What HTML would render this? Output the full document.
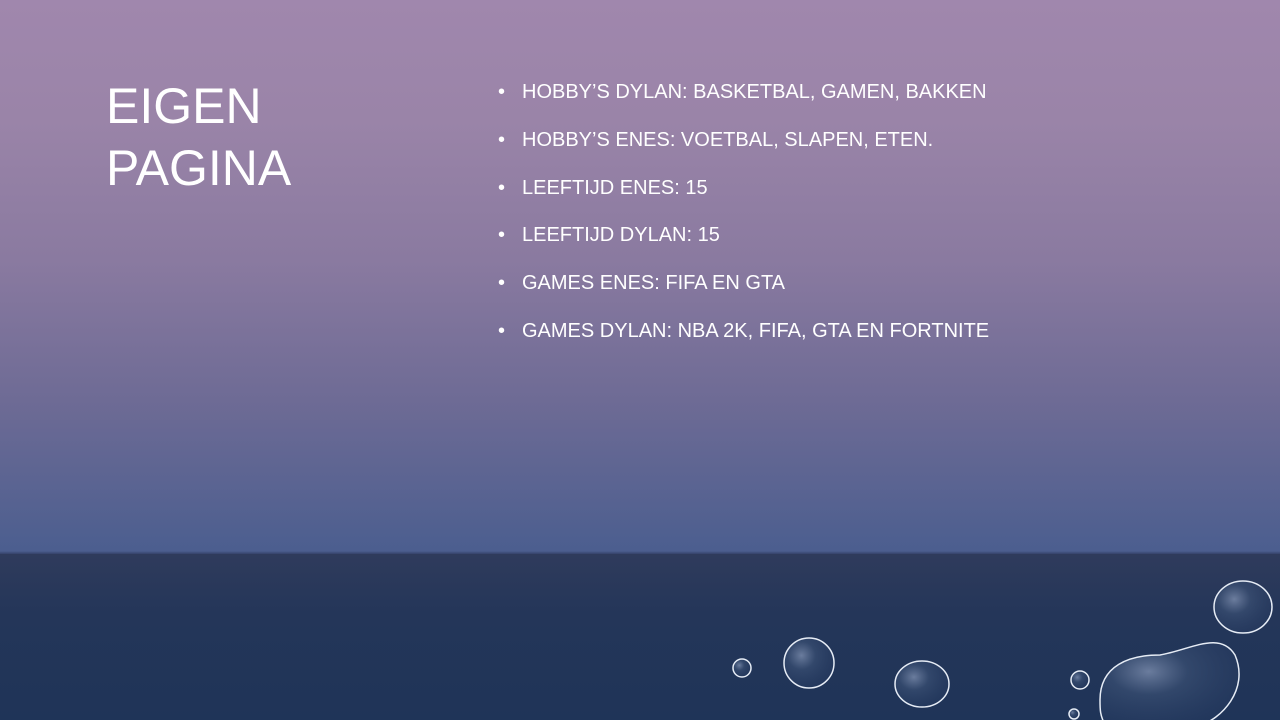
<!DOCTYPE html>
<html><head><style>
html,body{margin:0;padding:0}
body{width:1280px;height:720px;overflow:hidden;position:relative;font-family:"Liberation Sans",sans-serif;
background:linear-gradient(to bottom,#a087ad 0px,#9a84a8 120px,#8a7aa0 260px,#6e6b95 400px,#4b5e8f 553px)}
.bottom{position:absolute;left:0;top:554px;width:1280px;height:166px;background:linear-gradient(to bottom,#2f3b5c,#243659 60px,#1f3458)}
.bottom:before{content:"";position:absolute;left:0;top:-3px;width:100%;height:3px;background:linear-gradient(to bottom,rgba(0,0,0,0),rgba(20,25,50,.4))}
h1{position:absolute;left:106px;top:75px;margin:0;color:#fff;font-weight:normal;font-size:50px;line-height:62px}
ul{position:absolute;left:498px;top:80px;margin:0;padding:0;list-style:none;color:#fff;font-size:20px}
li{height:47.8px;line-height:24px;position:relative;padding-left:24px;white-space:nowrap}
li:before{content:"•";position:absolute;left:0;font-size:20px}
</style></head><body>
<h1>EIGEN<br>PAGINA</h1>
<ul>
<li>HOBBY’S DYLAN: BASKETBAL, GAMEN, BAKKEN</li>
<li>HOBBY’S ENES: VOETBAL, SLAPEN, ETEN.</li>
<li>LEEFTIJD ENES: 15</li>
<li>LEEFTIJD DYLAN: 15</li>
<li>GAMES ENES: FIFA EN GTA</li>
<li>GAMES DYLAN: NBA 2K, FIFA, GTA EN FORTNITE</li>
</ul>
<div class="bottom"></div>
<svg width="1280" height="720" style="position:absolute;left:0;top:0">
<defs><radialGradient id="g" cx="0.35" cy="0.35" r="0.7"><stop offset="0" stop-color="#8a9bbb" stop-opacity=".7"/><stop offset=".4" stop-color="#3e5478" stop-opacity=".6"/><stop offset="1" stop-color="#2a3f66" stop-opacity=".3"/></radialGradient></defs>
<g fill="url(#g)" stroke="#e6ecf5" stroke-width="1.5">
<circle cx="742" cy="668" r="9"/>
<circle cx="809" cy="663" r="25"/>
<ellipse cx="922" cy="684" rx="27" ry="23"/>
<circle cx="1080" cy="680" r="9"/>
<circle cx="1074" cy="714" r="5"/>
<ellipse cx="1243" cy="607" rx="29" ry="26"/>
<path d="M1100 700 C1100 665 1130 655 1160 655 C1190 650 1220 630 1235 655 C1250 690 1220 720 1200 725 L1105 725 C1100 715 1100 710 1100 700Z"/>
</g>
</svg>
</body></html>
